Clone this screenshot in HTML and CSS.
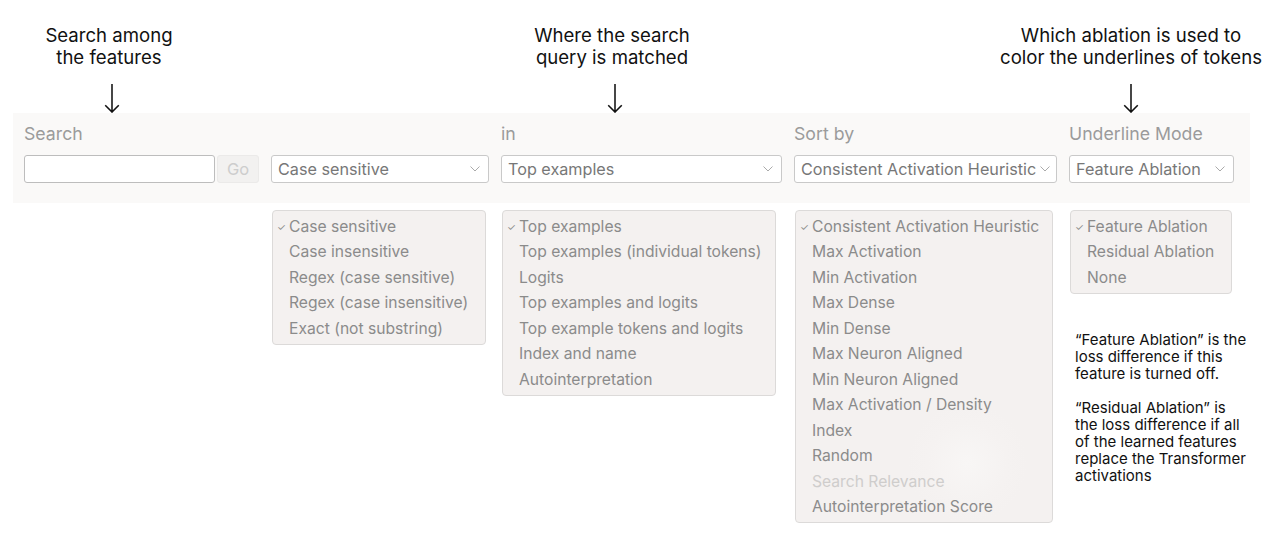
FILE: index.html
```html
<!DOCTYPE html>
<html lang="en">
<head>
<meta charset="utf-8">
<title>Feature search controls</title>
<link rel="stylesheet" href="styles.css">
</head>
<body>
<div class="page">
  <div class="notes">
    <div class="note note-search">
      <p>Search among<br>the features</p>
      <svg class="arrow" width="18" height="30" viewBox="0 0 18 30"><path d="M9 0 V29 M2 22 L9 29 L16 22" fill="none" stroke="#111" stroke-width="1.6"/></svg>
    </div>
    <div class="note note-in">
      <p>Where the search<br>query is matched</p>
      <svg class="arrow" width="18" height="30" viewBox="0 0 18 30"><path d="M9 0 V29 M2 22 L9 29 L16 22" fill="none" stroke="#111" stroke-width="1.6"/></svg>
    </div>
    <div class="note note-underline">
      <p>Which ablation is used to<br>color the underlines of tokens</p>
      <svg class="arrow" width="18" height="30" viewBox="0 0 18 30"><path d="M9 0 V29 M2 22 L9 29 L16 22" fill="none" stroke="#111" stroke-width="1.6"/></svg>
    </div>
  </div>

  <div class="panel">
    <div class="field">
      <div class="label">Search</div>
      <div class="search-row">
        <div class="input"></div>
        <div class="go">Go</div>
      </div>
    </div>
    <div class="field">
      <div class="label">&nbsp;</div>
      <div class="select"><span>Case sensitive</span><svg class="chev" width="10" height="6" viewBox="0 0 10 6"><path d="M0.5 0.5 L5 5 L9.5 0.5" fill="none" stroke="#aaa" stroke-width="1"/></svg></div>
    </div>
    <div class="field">
      <div class="label">in</div>
      <div class="select"><span>Top examples</span><svg class="chev" width="10" height="6" viewBox="0 0 10 6"><path d="M0.5 0.5 L5 5 L9.5 0.5" fill="none" stroke="#aaa" stroke-width="1"/></svg></div>
    </div>
    <div class="field">
      <div class="label">Sort by</div>
      <div class="select select-tight"><span>Consistent Activation Heuristic</span><svg class="chev" width="10" height="6" viewBox="0 0 10 6"><path d="M0.5 0.5 L5 5 L9.5 0.5" fill="none" stroke="#aaa" stroke-width="1"/></svg></div>
    </div>
    <div class="field">
      <div class="label">Underline Mode</div>
      <div class="select"><span>Feature Ablation</span><svg class="chev" width="10" height="6" viewBox="0 0 10 6"><path d="M0.5 0.5 L5 5 L9.5 0.5" fill="none" stroke="#aaa" stroke-width="1"/></svg></div>
    </div>
  </div>

  <div class="menus">
    <div class="col"></div>
    <div class="col">
      <ul class="menu menu-case">
        <li class="checked">Case sensitive</li>
        <li>Case insensitive</li>
        <li>Regex (case sensitive)</li>
        <li>Regex (case insensitive)</li>
        <li>Exact (not substring)</li>
      </ul>
    </div>
    <div class="col">
      <ul class="menu menu-in">
        <li class="checked">Top examples</li>
        <li>Top examples (individual tokens)</li>
        <li>Logits</li>
        <li>Top examples and logits</li>
        <li>Top example tokens and logits</li>
        <li>Index and name</li>
        <li>Autointerpretation</li>
      </ul>
    </div>
    <div class="col">
      <ul class="menu menu-sort">
        <li class="checked">Consistent Activation Heuristic</li>
        <li>Max Activation</li>
        <li>Min Activation</li>
        <li>Max Dense</li>
        <li>Min Dense</li>
        <li>Max Neuron Aligned</li>
        <li>Min Neuron Aligned</li>
        <li>Max Activation / Density</li>
        <li>Index</li>
        <li>Random</li>
        <li class="disabled">Search Relevance</li>
        <li>Autointerpretation Score</li>
      </ul>
    </div>
    <div class="col">
      <ul class="menu menu-underline">
        <li class="checked">Feature Ablation</li>
        <li>Residual Ablation</li>
        <li>None</li>
      </ul>
      <div class="explain">
        <p>“Feature Ablation” is the<br>loss difference if this<br>feature is turned off.</p>
        <p>“Residual Ablation” is<br>the loss difference if all<br>of the learned features<br>replace the Transformer<br>activations</p>
      </div>
    </div>
  </div>
</div>
</body>
</html>
```

FILE: styles.css
```css
html, body {
  margin: 0;
  padding: 0;
  background: #ffffff;
}

body {
  font-family: Inter, "Noto Sans", "Liberation Sans", sans-serif;
  color: #111;
}

.page {
  width: 1284px;
}

/* annotations above the panel */
.notes {
  display: flex;
  height: 113px;
  padding-top: 24px;
  box-sizing: border-box;
}

.note {
  display: flex;
  flex-direction: column;
  align-items: center;
}

.note p {
  margin: 0;
  font-size: 18.6px;
  line-height: 22px;
  text-align: center;
  white-space: nowrap;
  color: #111;
}

.note .arrow {
  display: block;
  margin-top: 16px;
}

.note-search {
  width: 200px;
  margin-left: 9px;
}

.note-search .arrow {
  margin-left: 6px;
}

.note-in {
  width: 220px;
  margin-left: 293px;
}

.note-in .arrow {
  margin-left: 6px;
}

.note-underline {
  width: 290px;
  margin-left: 264px;
}

/* control panel */
.panel {
  margin-left: 13px;
  width: 1237px;
  box-sizing: border-box;
  background: #faf9f8;
  padding: 11px 16px 20px 11px;
  display: grid;
  grid-template-columns: 235px 218px 281px 263px 165px;
  column-gap: 12px;
}

.field {
  display: flex;
  flex-direction: column;
  gap: 11px;
}

.label {
  font-size: 17.7px;
  line-height: 20px;
  color: #9b9b9b;
  white-space: nowrap;
}

.search-row {
  display: flex;
  gap: 2px;
}

.input {
  width: 191px;
  height: 28px;
  box-sizing: border-box;
  background: #fff;
  border: 1px solid #bdbdbd;
  border-radius: 3px;
}

.go {
  width: 42px;
  height: 28px;
  box-sizing: border-box;
  border: 1px solid #ebeae9;
  background: #f2f1f0;
  border-radius: 3px;
  color: #cdcdcd;
  font-size: 16.5px;
  line-height: 26px;
  text-align: center;
}

.select {
  height: 28px;
  box-sizing: border-box;
  background: #fff;
  border: 1px solid #c9c9c9;
  border-radius: 3px;
  display: flex;
  align-items: center;
  justify-content: space-between;
  padding: 0 8px 0 6px;
  font-size: 16.2px;
  color: #777;
  white-space: nowrap;
}

.select-tight {
  padding-right: 6px;
}

.chev {
  display: block;
  flex: none;
}

/* open menus below */
.menus {
  margin-left: 13px;
  width: 1237px;
  box-sizing: border-box;
  padding: 7px 16px 0 11px;
  display: grid;
  grid-template-columns: 235px 218px 281px 263px 165px;
  column-gap: 12px;
  align-items: start;
}

.menu {
  list-style: none;
  margin: 0 0 0 1px;
  padding: 3px 0;
  background: #f4f1f0;
  border: 1px solid #dcdad9;
  border-radius: 4px;
  box-sizing: border-box;
}

.menu li {
  position: relative;
  padding-left: 16px;
  font-size: 15.65px;
  line-height: 25.45px;
  color: #8b8b8b;
  white-space: nowrap;
}

.menu li.checked::before {
  content: "✓";
  position: absolute;
  left: 4px;
  top: 1px;
  font-size: 10px;
  color: #8b8b8b;
}

.menu li.disabled {
  color: #cfcdcc;
}

.menu-case { width: 214px; }
.menu-in { width: 274px; }
.menu-sort {
  width: 258px;
  background: radial-gradient(circle at 67% 81%, #f8f6f5 0, #f5f2f1 40px, #f4f1f0 60px);
}
.menu-underline { width: 162px; }

.explain {
  margin: 37px 0 0 6px;
  font-size: 15px;
  line-height: 17px;
  color: #111;
  white-space: nowrap;
}

.explain p {
  margin: 0 0 17px 0;
}
```
